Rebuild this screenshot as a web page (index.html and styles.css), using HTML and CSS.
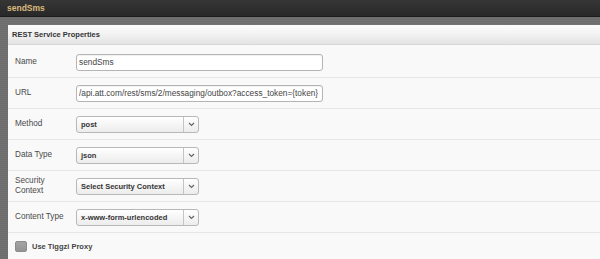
FILE: index.html
```html
<!DOCTYPE html>
<html lang="en">
<head>
  <meta charset="UTF-8" />
  <title>sendSms</title>
  <link rel="stylesheet" href="styles.css">
</head>
<body>

  <div class="topbar">sendSms</div>

  <div class="frame">
    <div class="panel">
      <div class="panel-head">REST Service Properties</div>

      <div class="row first">
        <label>Name</label>
        <input type="text" class="field" value="sendSms" />
      </div>

      <div class="row">
        <label>URL</label>
        <input type="text" class="field" value="/api.att.com/rest/sms/2/messaging/outbox?access_token={token}" />
      </div>

      <div class="row">
        <label>Method</label>
        <div class="select"><span>post</span><i class="arrow"><svg width="7" height="5" viewBox="0 0 7 5"><path d="M1 1 L3.5 3.5 L6 1" fill="none" stroke="#666" stroke-width="1.2"/></svg></i></div>
      </div>

      <div class="row">
        <label>Data Type</label>
        <div class="select"><span>json</span><i class="arrow"><svg width="7" height="5" viewBox="0 0 7 5"><path d="M1 1 L3.5 3.5 L6 1" fill="none" stroke="#666" stroke-width="1.2"/></svg></i></div>
      </div>

      <div class="row">
        <label>Security<br>Context</label>
        <div class="select"><span>Select Security Context</span><i class="arrow"><svg width="7" height="5" viewBox="0 0 7 5"><path d="M1 1 L3.5 3.5 L6 1" fill="none" stroke="#666" stroke-width="1.2"/></svg></i></div>
      </div>

      <div class="row">
        <label>Content Type</label>
        <div class="select"><span>x-www-form-urlencoded</span><i class="arrow"><svg width="7" height="5" viewBox="0 0 7 5"><path d="M1 1 L3.5 3.5 L6 1" fill="none" stroke="#666" stroke-width="1.2"/></svg></i></div>
      </div>

      <div class="check-row">
        <span class="box"></span>
        <span class="check-label">Use Tiggzi Proxy</span>
      </div>
    </div>
  </div>

</body>
</html>
```

FILE: styles.css
```css
* {
  box-sizing: border-box;
  margin: 0;
  padding: 0;
  font-family: 'Liberation Sans', Arial, sans-serif;
}

body {
  background: #6e6e6e;
  height: 259px;
  overflow: hidden;
}

.topbar {
  height: 17px;
  background: linear-gradient(to bottom, #363636, #282828);
  border-bottom: 1px solid #1c1c1c;
  color: #dcbc7e;
  font-size: 8.5px;
  font-weight: bold;
  line-height: 16px;
  padding-left: 7px;
}

.frame {
  padding: 8px 0 0 8px;
  background: repeating-linear-gradient(to bottom, #6c6c6c 0, #6c6c6c 1px, #727272 1px, #727272 2px);
}

.panel {
  background: #f9f9f9;
  height: 234px;
}

.panel-head {
  height: 20px;
  background: linear-gradient(to bottom, #fbfbfb 0%, #f4f4f4 40%, #e4e4e4 100%);
  border-bottom: 1px solid #d8d8d8;
  color: #333;
  font-size: 7.5px;
  font-weight: bold;
  line-height: 19px;
  padding-left: 4px;
}

.row {
  display: flex;
  align-items: center;
  height: 31px;
  padding-left: 7px;
  border-bottom: 1px solid #e6e6e6;
}

.row.first {
  height: 33px;
  padding-top: 2px;
}

.row label {
  width: 61px;
  color: #4a4a4a;
  font-size: 8.2px;
  line-height: 10px;
}

.field {
  width: 247px;
  height: 17px;
  border: 1px solid #b4b4b4;
  border-radius: 3px;
  background: #fff;
  box-shadow: inset 0 1px 1px rgba(0, 0, 0, 0.06);
  color: #444;
  font-size: 8.3px;
  padding: 0 1px 0 2px;
}

.select {
  display: flex;
  width: 123px;
  height: 17px;
  border: 1px solid #b8b8b8;
  border-radius: 3px;
  background: linear-gradient(to bottom, #ffffff, #ececec);
}

.select span {
  flex: 1;
  color: #333;
  font-size: 7.5px;
  font-weight: bold;
  line-height: 15px;
  padding-left: 4px;
  white-space: nowrap;
}

.arrow {
  width: 15px;
  border-left: 1px solid #c4c4c4;
  display: flex;
  align-items: center;
  justify-content: center;
}

.check-row {
  display: flex;
  align-items: center;
  padding: 8px 0 0 7px;
}

.box {
  width: 12px;
  height: 11px;
  border: 1px solid #8c8c8c;
  border-radius: 2px;
  background: linear-gradient(to bottom, #a4a4a4, #949494);
  margin-right: 5px;
}

.check-label {
  color: #444;
  font-size: 7.5px;
  font-weight: bold;
}
```
